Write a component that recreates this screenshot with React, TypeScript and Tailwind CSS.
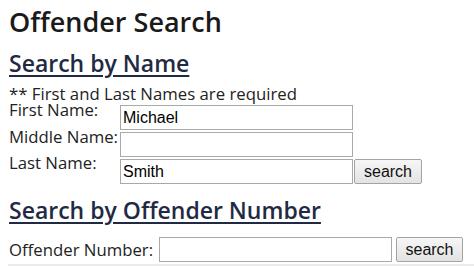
import React from "react";

const sans = { fontFamily: '"Open Sans", "Liberation Sans", sans-serif' };

function Input({ value, w }: { value?: string; w: string }) {
  return (
    <div
      className={`${w} h-[25px] border border-[#a9a9a9] bg-white pl-[2px] flex items-center text-[16px] text-black leading-none`}
      style={{ fontFamily: '"Liberation Sans", Arial, sans-serif' }}
    >
      {value}
    </div>
  );
}

function Button({ w }: { w: string }) {
  return (
    <div
      className={`${w} h-[25px] border border-[#a3a3a3] rounded-[2px] bg-gradient-to-b from-[#f6f6f6] to-[#e3e3e3] flex items-center justify-center text-[16px] text-[#111] leading-none`}
      style={{ fontFamily: '"Liberation Sans", Arial, sans-serif' }}
    >
      search
    </div>
  );
}

export default function App() {
  return (
    <div className="w-[474px] h-[266px] bg-white overflow-hidden text-[#222]" style={sans}>
      <div className="pl-[9px]">
        <h1 className="pt-[4px] text-[27px] leading-[36px] font-semibold text-[#1a1a1a]">
          Offender Search
        </h1>
        <h2 className="mt-[7px] text-[23px] leading-[32px] font-semibold text-[#1f2a44] underline decoration-[1.5px] underline-offset-[3px]">
          Search by Name
        </h2>
        <div className="text-[16.75px] leading-[15px] mt-[7px]">** First and Last Names are required</div>
        <div className="mt-[4px] flex flex-col gap-[2px] text-[16.75px]">
          <div className="flex items-start">
            <div className="w-[111px] leading-[8px] pt-[1px]">First Name:</div>
            <Input value="Michael" w="w-[233px]" />
          </div>
          <div className="flex items-start">
            <div className="w-[111px] leading-[8px] pt-[1px]">Middle Name:</div>
            <Input w="w-[233px]" />
          </div>
          <div className="flex items-start">
            <div className="w-[111px] leading-[8px]">Last Name:</div>
            <Input value="Smith" w="w-[233px]" />
            <div className="ml-[1px]">
              <Button w="w-[68px]" />
            </div>
          </div>
        </div>
        <h2 className="mt-[10px] text-[23px] leading-[32px] font-semibold text-[#1f2a44] underline decoration-[1.5px] underline-offset-[3px]">
          Search by Offender Number
        </h2>
        <div className="mt-[11px] flex items-center text-[16.75px]">
          <div className="w-[150px] leading-[20px]">Offender Number:</div>
          <Input w="w-[233px]" />
          <div className="ml-[4px]">
            <Button w="w-[67px]" />
          </div>
        </div>
      </div>
      <div className="ml-[8px] mt-[2px] h-[4px] bg-[#ebebeb]" />
    </div>
  );
}
